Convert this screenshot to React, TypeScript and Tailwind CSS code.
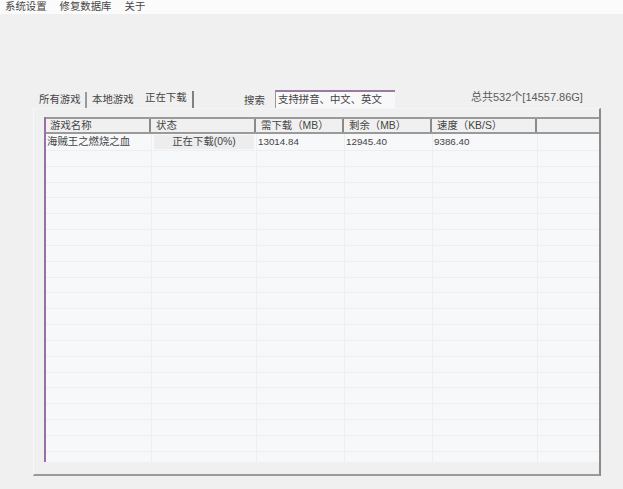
import React from 'react';

const font = { fontFamily: '"Liberation Sans", "Noto Sans CJK SC", sans-serif' };

const menus = ['系统设置', '修复数据库', '关于'];
const columns = ['游戏名称', '状态', '需下载（MB）', '剩余（MB）', '速度（KB/S）', ''];
const blankRows = Array.from({ length: 20 }, (_, i) => i);

const App = () => {
  return (
    <div className="w-[623px] h-[489px] overflow-hidden bg-[#f0f0f0] text-[10.4px] leading-none text-[#444444]" style={font}>
      {/* Menu bar */}
      <div className="flex h-[14px] items-center gap-[13px] bg-[#fbfbfb] pl-[5px]">
        {menus.map((m) => (
          <span key={m}>{m}</span>
        ))}
      </div>

      {/* Tabs, search, total */}
      <div className="mt-[76px] flex h-[18px] items-end pl-[34px]">
        <div className="flex h-[18px] w-[160px] items-end">
          <div className="flex h-[16px] w-[53px] items-center border-r-2 border-[#9a9a9a] pl-[5px]">所有游戏</div>
          <div className="flex h-[16px] w-[54px] items-center pl-[5px]">本地游戏</div>
          <div className="flex h-[17px] w-[53px] items-center border-r-2 border-[#808080] pb-[2px] pl-[4px]">正在下载</div>
        </div>
        <span className="mb-[2px] ml-[50px] w-[31px]">搜索</span>
        <div className="flex h-[18px] w-[120px] items-center border-t-2 border-l border-t-[#9a7aa0] border-l-[#999999] bg-[#f8f8fa] pl-[2px]">
          支持拼音、中文、英文
        </div>
        <span className="mb-[5px] ml-[76px] text-[11px] text-[#5a5a5a]">总共532个[14557.86G]</span>
      </div>

      {/* Panel */}
      <div className="ml-[33px] h-[368px] w-[568px] border-r-2 border-b-2 border-l border-t border-r-[#8a8a8a] border-b-[#9a9a9a] border-l-[#f8f8f8] border-t-[#f4f4f4] pt-[8px] pl-[10px]">
        <div className="h-[345px] border-l-2 border-[#9a6ea6]">
          {/* Header */}
          <div className="grid h-[17px] grid-cols-[105px_105px_88px_88px_105px_1fr] border-t-2 border-b-2 border-[#9a9a9a] bg-[#f0f0f0]">
            {columns.map((c, i) => (
              <div key={i} className={`flex items-center border-[#8a8a8a] pt-[2px] ${i < 5 ? 'border-r-2' : ''} ${i === 0 ? 'pl-[4px]' : 'pl-[5px]'}`}>
                {c}
              </div>
            ))}
          </div>

          {/* Rows */}
          <div className="h-[328px] overflow-hidden bg-[#f7f8fa]">
            <div className="grid h-[17px] grid-cols-[106px_105px_88px_88px_105px_1fr] border-b border-[#edeef0]">
              <div className="flex items-center border-r border-[#edeef0] pl-[1px]">海贼王之燃烧之血</div>
              <div className="flex items-center justify-center border-r border-[#edeef0] px-[2px]">
                <div className="flex h-[14px] w-full items-center justify-center bg-[#ededed]">正在下载(0%)</div>
              </div>
              <div className="flex items-center border-r border-[#edeef0] pl-[1px] text-[9.8px]">13014.84</div>
              <div className="flex items-center border-r border-[#edeef0] pl-[1px] text-[9.8px]">12945.40</div>
              <div className="flex items-center border-r border-[#edeef0] pl-[1px] text-[9.8px]">9386.40</div>
              <div />
            </div>
            {blankRows.map((r) => (
              <div key={r} className="grid h-[15.84px] grid-cols-[106px_105px_88px_88px_105px_1fr] border-b border-[#edeef0]">
                <div className="border-r border-[#edeef0]" />
                <div className="border-r border-[#edeef0]" />
                <div className="border-r border-[#edeef0]" />
                <div className="border-r border-[#edeef0]" />
                <div className="border-r border-[#edeef0]" />
                <div />
              </div>
            ))}
          </div>
        </div>
      </div>
    </div>
  );
};

export default App;
